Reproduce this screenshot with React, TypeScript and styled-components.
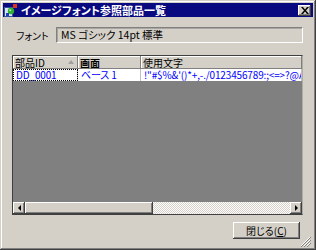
import React from 'react';
import styled, { createGlobalStyle } from 'styled-components';

const GlobalStyle = createGlobalStyle`
  html, body {
    margin: 0;
    padding: 0;
    background: #d4d0c8;
  }
  * {
    box-sizing: border-box;
  }
`;

const FONT = `"Noto Sans CJK JP", "Liberation Sans", sans-serif`;

const Window = styled.div`
  width: 316px;
  height: 250px;
  padding: 3px;
  display: flex;
  flex-direction: column;
  background: #d4d0c8;
  font-family: ${FONT};
  font-size: 10px;
  font-feature-settings: 'palt';
  color: #000;
  box-shadow: inset -1px -1px #404040, inset 1px 1px #d4d0c8,
    inset -2px -2px #808080, inset 2px 2px #ffffff;
`;

const TitleBar = styled.div`
  height: 14px;
  display: flex;
  align-items: center;
  padding: 0 2px 0 1px;
  gap: 3px;
  background: #0a0a80;
  color: #fff;
  font-weight: bold;
  font-size: 11px;
  line-height: 14px;
`;

const TitleText = styled.span`
  flex: 1;
  white-space: nowrap;
`;

const CloseButton = styled.div`
  width: 13px;
  height: 11px;
  display: flex;
  align-items: center;
  justify-content: center;
  background: #d4d0c8;
  box-shadow: inset -1px -1px #404040, inset 1px 1px #ffffff,
    inset -2px -2px #808080;
`;

const Body = styled.div`
  flex: 1;
  display: flex;
  flex-direction: column;
  padding: 10px 10px 0 9px;
`;

const FontRow = styled.div`
  display: flex;
  align-items: center;
  height: 16px;
`;

const Label = styled.span`
  width: 44px;
  padding-left: 4px;
  white-space: nowrap;
`;

const Field = styled.div`
  flex: 1;
  height: 16px;
  padding: 0 4px;
  line-height: 14px;
  font-size: 10.5px;
  white-space: nowrap;
  border-top: 1px solid #808080;
  border-left: 1px solid #808080;
  border-bottom: 1px solid #ffffff;
  border-right: 1px solid #ffffff;
  box-shadow: inset 1px 1px #a8a6a0;
`;

const Grid = styled.div`
  margin-top: 12px;
  height: 160px;
  display: flex;
  flex-direction: column;
  border: 1px solid #404040;
  border-right-color: #b0aca4;
  overflow: hidden;
`;

const Row = styled.div<{ $header?: boolean }>`
  display: grid;
  grid-template-columns: 65px 63px 1fr;
  height: ${(p) => (p.$header ? 13 : 12)}px;
  background: ${(p) => (p.$header ? '#d4d0c8' : '#ffffff')};
`;

const HeadCell = styled.div<{ $active?: boolean }>`
  position: relative;
  padding-left: 2px;
  line-height: 13px;
  white-space: nowrap;
  overflow: hidden;
  font-weight: ${(p) => (p.$active ? 'bold' : 'normal')};
  box-shadow: inset -1px -1px #808080, inset 1px 1px #ffffff;
`;

const SortArrow = styled.span`
  position: absolute;
  right: 4px;
  top: 4px;
  width: 0;
  height: 0;
  border-left: 3px solid transparent;
  border-right: 3px solid transparent;
  border-bottom: 4px solid #a0a0a0;
`;

const DataCell = styled.div<{ $focus?: boolean }>`
  padding-left: 3px;
  line-height: 12px;
  color: #0000ff;
  white-space: nowrap;
  overflow: hidden;
  letter-spacing: -0.15px;
  border-right: 1px solid #c0c0c0;
  outline: ${(p) => (p.$focus ? '1px dotted #000' : 'none')};
  outline-offset: -1px;
`;

const Empty = styled.div`
  flex: 1;
  background: #808080;
`;

const HScroll = styled.div`
  height: 12px;
  display: flex;
  background: repeating-conic-gradient(#d4d0c8 0 25%, #ffffff 0 50%) 0 0 / 2px 2px;
`;

const ScrollButton = styled.div`
  width: 12px;
  display: flex;
  align-items: center;
  justify-content: center;
  background: #d4d0c8;
  box-shadow: inset -1px -1px #404040, inset 1px 1px #ffffff,
    inset -2px -2px #808080;
`;

const Thumb = styled.div`
  width: 128px;
  background: #d4d0c8;
  box-shadow: inset -1px -1px #404040, inset 1px 1px #ffffff,
    inset -2px -2px #808080;
`;

const Track = styled.div`
  flex: 1;
`;

const Arrow = styled.span<{ $dir: 'left' | 'right' }>`
  width: 0;
  height: 0;
  border-top: 3px solid transparent;
  border-bottom: 3px solid transparent;
  ${(p) =>
    p.$dir === 'left'
      ? 'border-right: 3px solid #000;'
      : 'border-left: 3px solid #000;'}
`;

const Footer = styled.div`
  display: flex;
  justify-content: flex-end;
  align-items: flex-start;
  padding: 7px 3px 0 0;
  flex: 1;
  position: relative;
`;

const Button = styled.div`
  width: 67px;
  height: 17px;
  display: flex;
  align-items: center;
  justify-content: center;
  background: #d4d0c8;
  box-shadow: inset -1px -1px #404040, inset 1px 1px #ffffff,
    inset -2px -2px #808080;
  u {
    text-decoration: underline;
  }
`;

const Grip = styled.svg`
  position: absolute;
  right: -8px;
  bottom: 0;
`;

const AppIcon = () => (
  <svg width="14" height="13" viewBox="0 0 14 13">
    <rect x="0.5" y="3.5" width="8" height="9" fill="#d8e4f8" stroke="#3050a0" />
    <rect x="9" y="0" width="4" height="4" fill="#e03020" />
    <circle cx="7" cy="7" r="3.2" fill="#30b030" />
    <circle cx="6.2" cy="6.2" r="1" fill="#b0f0a0" />
    <rect x="2" y="9" width="3" height="3" fill="#2040c0" />
  </svg>
);

const CloseGlyph = () => (
  <svg width="8" height="7" viewBox="0 0 8 7">
    <path d="M0 0h2l2 2.5L6 0h2L5 3.5 8 7H6L4 4.5 2 7H0l3-3.5z" fill="#000" />
  </svg>
);

const App: React.FC = () => {
  const chars = `!"#$%&'()*+,-./0123456789:;<=>?@ABCDEFGHIJKLMN`;

  return (
    <>
      <GlobalStyle />
      <Window>
        <TitleBar>
          <AppIcon />
          <TitleText>イメージフォント参照部品一覧</TitleText>
          <CloseButton>
            <CloseGlyph />
          </CloseButton>
        </TitleBar>
        <Body>
          <FontRow>
            <Label>フォント</Label>
            <Field>MS ゴシック 14pt 標準</Field>
          </FontRow>
          <Grid>
            <Row $header>
              <HeadCell>
                部品ID
                <SortArrow />
              </HeadCell>
              <HeadCell $active>画面</HeadCell>
              <HeadCell>使用文字</HeadCell>
            </Row>
            <Row>
              <DataCell $focus>DD_0001</DataCell>
              <DataCell>ベース 1</DataCell>
              <DataCell>{chars}</DataCell>
            </Row>
            <Empty />
            <HScroll>
              <ScrollButton>
                <Arrow $dir="left" />
              </ScrollButton>
              <Thumb />
              <Track />
              <ScrollButton>
                <Arrow $dir="right" />
              </ScrollButton>
            </HScroll>
          </Grid>
          <Footer>
            <Button>
              閉じる(<u>C</u>)
            </Button>
            <Grip width="11" height="11" viewBox="0 0 11 11">
              <path d="M10 1L1 10M10 4L4 10M10 7L7 10" stroke="#ffffff" strokeWidth="1" />
              <path d="M11 1L1 11M11 4L4 11M11 7L7 11" stroke="#808080" strokeWidth="1" />
            </Grip>
          </Footer>
        </Body>
      </Window>
    </>
  );
};

export default App;
